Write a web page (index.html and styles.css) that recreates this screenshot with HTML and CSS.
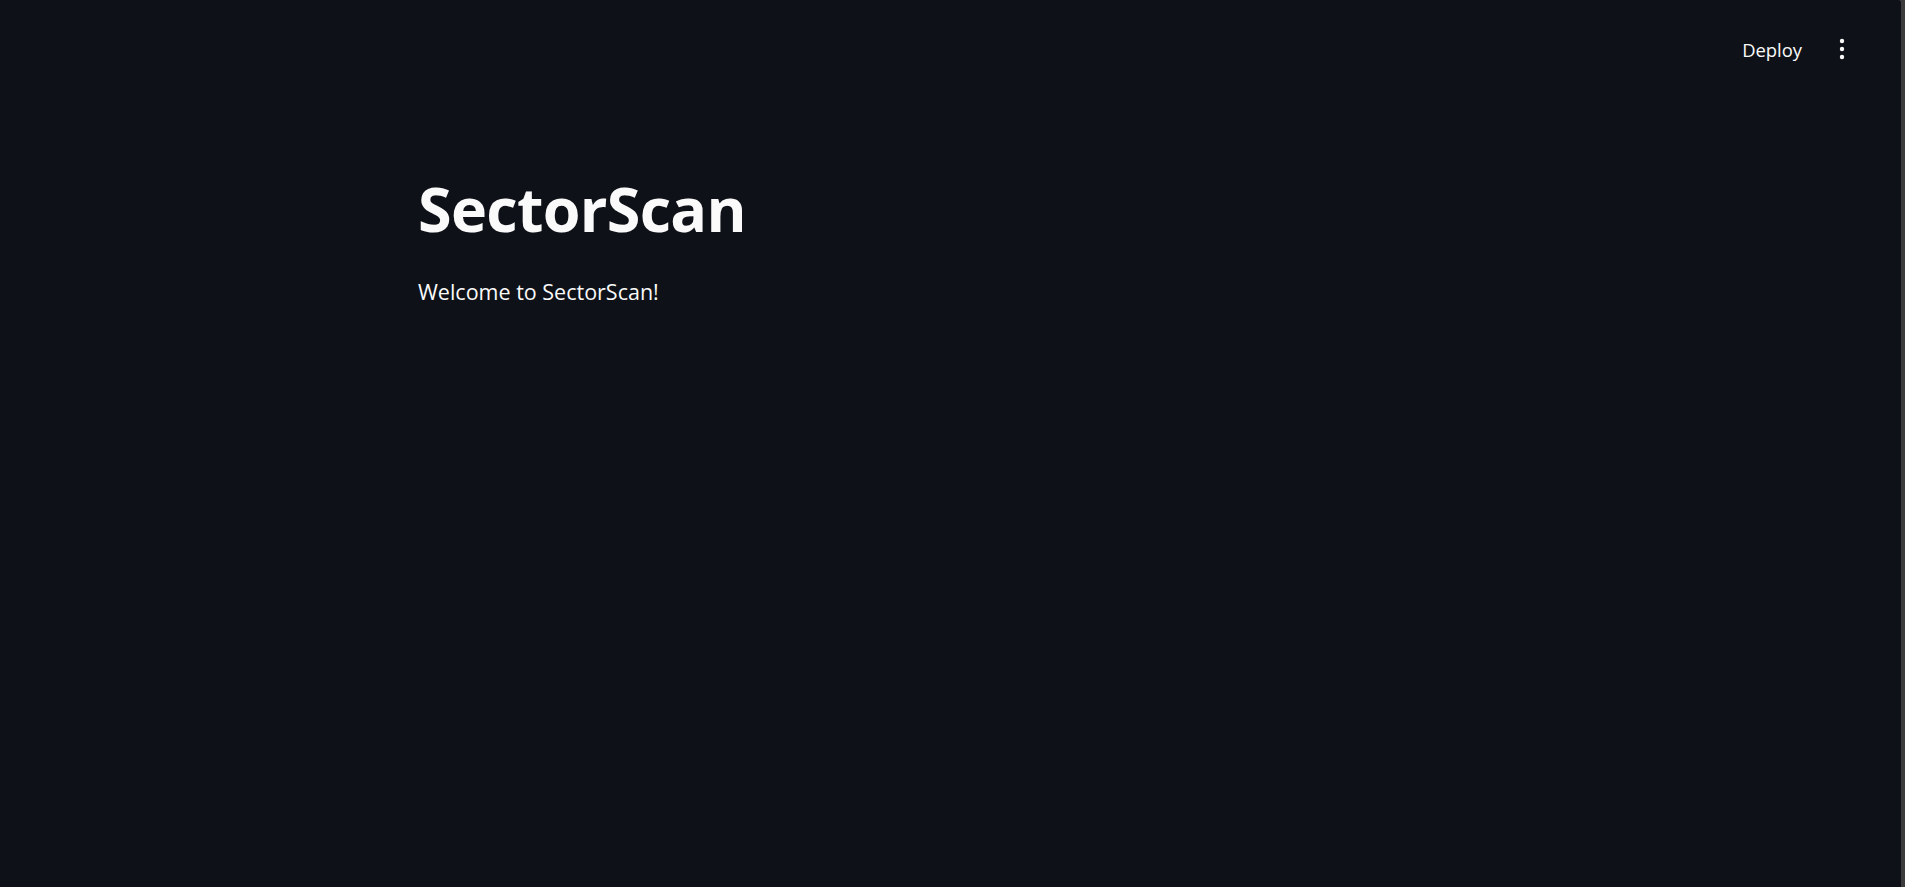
FILE: index.html
```html
<!DOCTYPE html>
<html lang="en">
<head>
<meta charset="utf-8">
<title>SectorScan</title>
<link rel="stylesheet" href="styles.css">
</head>
<body>
<div class="app">
  <header class="header">
    <span class="deploy">Deploy</span>
    <span class="menu" aria-label="Main menu">
      <svg width="6" height="22" viewBox="0 0 6 22"><circle cx="3" cy="3" r="2.2" fill="#fafafa"/><circle cx="3" cy="11" r="2.2" fill="#fafafa"/><circle cx="3" cy="19" r="2.2" fill="#fafafa"/></svg>
    </span>
  </header>
  <main class="main">
    <h1 class="title">SectorScan</h1>
    <p class="text">Welcome to SectorScan!</p>
  </main>
</div>
</body>
</html>
```
FILE: styles.css
```css
html, body {
  margin: 0;
  padding: 0;
  height: 100%;
  background: #3c3c3c;
  overflow: hidden;
}
.app {
  width: 1901px;
  height: 887px;
  background: #0e1117;
  border-top-right-radius: 3px;
  color: #fafafa;
  font-family: "Open Sans", "Noto Sans", sans-serif;
}
.header {
  height: 100px;
  display: flex;
  align-items: center;
  justify-content: flex-end;
  padding-right: 56px;
  gap: 37px;
}
.deploy {
  font-size: 18.4px;
  line-height: 24px;
}
.menu {
  display: flex;
  align-items: center;
  margin-top: -2px;
}
.menu svg { display: block; }
.main {
  padding-left: 418px;
  padding-top: 72px;
}
.title {
  margin: 0;
  font-size: 61px;
  line-height: 1.2;
  font-weight: 700;
  letter-spacing: -0.7px;
}
.text {
  margin: 30px 0 0;
  font-size: 21.5px;
  line-height: 1.6;
}
```
